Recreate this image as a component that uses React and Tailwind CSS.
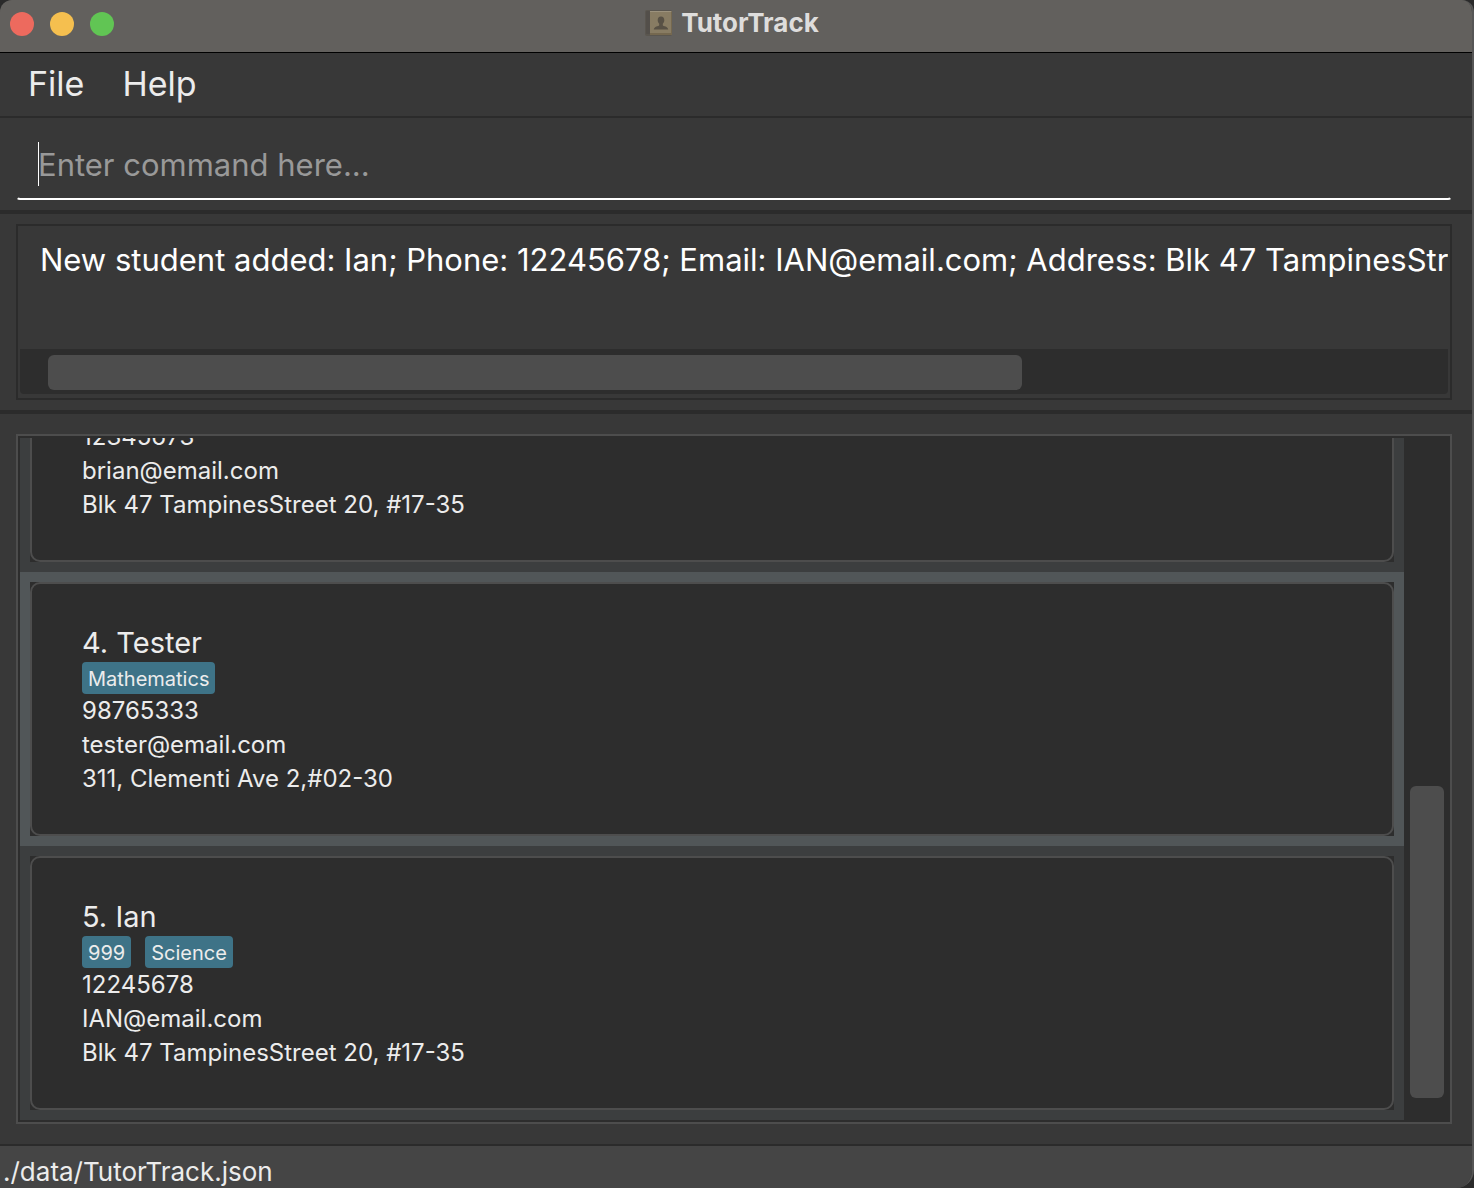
const students = [
  {
    id: 3,
    tags: [],
    details: ["12345673", "brian@email.com", "Blk 47 TampinesStreet 20, #17-35"],
  },
  {
    id: 4,
    name: "Tester",
    tags: ["Mathematics"],
    details: ["98765333", "tester@email.com", "311, Clementi Ave 2,#02-30"],
    selected: true,
  },
  {
    id: 5,
    name: "Ian",
    tags: ["999", "Science"],
    details: ["12245678", "IAN@email.com", "Blk 47 TampinesStreet 20, #17-35"],
  },
];

function BookIcon() {
  return (
    <svg width="28" height="28" viewBox="0 0 28 28" aria-hidden="true">
      <rect x="0" y="1" width="27" height="26" rx="2" fill="#5a564f" />
      <rect x="1" y="2" width="4" height="23" rx="1" fill="#534f4a" />
      <rect x="5" y="2" width="22" height="23" rx="1" fill="#887c63" />
      <path d="M5 2h21v1H5z" fill="#9c927d" />
      <path d="M26 3h1v22h-1zM5 24h22v2H5z" fill="#75684f" />
      <path
        d="M16 7.500c2.300 0 3.300 1.700 3.300 3.700 0 1.600-.7 2.700-1.500 3.500v1.500c.5 1.200 5.200 1 5.400 4.300H8.800c.2-3.300 4.900-3.100 5.400-4.300v-1.500c-.8-.8-1.500-1.900-1.500-3.500 0-2 1-3.700 3.300-3.700z"
        fill="#585145"
      />
    </svg>
  );
}

function TitleBar() {
  return (
    <header className="relative flex h-[53px] shrink-0 items-center justify-center border-b border-black bg-[#62605d] pr-2 pb-1.5">
      <div className="absolute left-2.5 top-3 flex gap-4">
        <button aria-label="Close" className="size-6 rounded-full bg-[#ed6a5e]" />
        <button aria-label="Minimize" className="size-6 rounded-full bg-[#f5bf4f]" />
        <button aria-label="Zoom" className="size-6 rounded-full bg-[#61c554]" />
      </div>
      <h1 className="flex items-center gap-2 text-[26px] leading-8 font-bold text-[#dedddc]">
        <BookIcon />
        TutorTrack
      </h1>
    </header>
  );
}

function StudentCell({ student }) {
  return (
    <li className={student.selected ? "shrink-0 bg-[#515658] p-2.5" : "shrink-0 bg-[#3c3e3f] p-2.5"}>
      <div className="bg-[#2d2d2d]">
        <article className="flex min-h-[254px] flex-col justify-end rounded-[10px] border-2 border-[#4d4d4d] px-[50px] py-[38px] text-[24px] leading-[34px]">
          {student.name && (
            <h2 className="pt-0.5 text-[29px] leading-[38px]">
              {student.id}. {student.name}
            </h2>
          )}
          {student.tags.length > 0 && (
            <div className="flex gap-3.5">
              {student.tags.map((tag) => (
                <span key={tag} className="rounded bg-[#3e7387] px-1.5 pt-0.5 text-[20px] leading-[30px]">
                  {tag}
                </span>
              ))}
            </div>
          )}
          {student.details.map((line) => (
            <p key={line}>{line}</p>
          ))}
        </article>
      </div>
    </li>
  );
}

export default function App() {
  return (
    <div className="h-screen bg-[#2a2a2a]">
      <div className="flex h-full flex-col overflow-hidden rounded-t-[12px] rounded-br-[18px] border-r-2 border-[#565656] bg-[#383838] font-['Inter',sans-serif] text-[#ececec]">
        <TitleBar />

        <nav className="flex h-[65px] shrink-0 items-center gap-[38px] border-b-2 border-[#2b2b2b] px-7 pb-0.5 text-[34px] leading-10">
          <button>File</button>
          <button>Help</button>
        </nav>

        <section className="shrink-0 border-b-4 border-[#2b2b2b] pt-5 pr-5 pb-2.5 pl-4">
          <div className="relative rounded-[4px] border-2 border-transparent border-b-white">
            <input
              aria-label="Command"
              placeholder="Enter command here..."
              className="block h-[58px] w-full bg-transparent px-5 pb-[10px] text-[31px] leading-10 text-white outline-none placeholder:text-[#999999]"
            />
            <span className="absolute left-5 top-0.5 h-11 w-px bg-white" />
          </div>
        </section>

        <section className="shrink-0 border-b-4 border-[#2b2b2b] py-2.5 pr-5 pl-4">
          <div className="border-2 border-[#2b2b2b] p-0.5 pb-1">
            <textarea
              readOnly
              aria-label="Result"
              wrap="off"
              defaultValue="New student added: Ian; Phone: 12245678; Email: IAN@email.com; Address: Blk 47 TampinesStreet"
              className="block h-[121px] w-full resize-none overflow-hidden bg-transparent pt-3 pl-5 text-[31px] leading-10 text-white outline-none"
            />
            <div className="rounded-b bg-[#2d2d2d] px-7 pt-1.5 pb-1">
              <div className="h-[35px] w-[71%] rounded-md bg-[#4d4d4d]" />
            </div>
          </div>
        </section>

        <main className="flex min-h-0 flex-1 border-b-2 border-[#2b2b2b] py-5 pr-5 pl-4">
          <div className="flex min-w-0 flex-1 border-2 border-[#4d4d4d] bg-[#2d2d2d] py-0.5 pl-0.5">
            <ul className="flex min-w-0 flex-1 flex-col justify-end overflow-hidden">
              {students.map((student) => (
                <StudentCell key={student.id} student={student} />
              ))}
            </ul>
            <div className="flex w-[46px] shrink-0 flex-col justify-end px-1.5 pb-[22px]">
              <div className="h-[312px] rounded-md bg-[#4d4d4d]" />
            </div>
          </div>
        </main>

        <footer className="h-[42px] shrink-0 bg-[#454545] px-[3px] pt-1.5 text-[26px] leading-10">
          ./data/TutorTrack.json
        </footer>
      </div>
    </div>
  );
}
